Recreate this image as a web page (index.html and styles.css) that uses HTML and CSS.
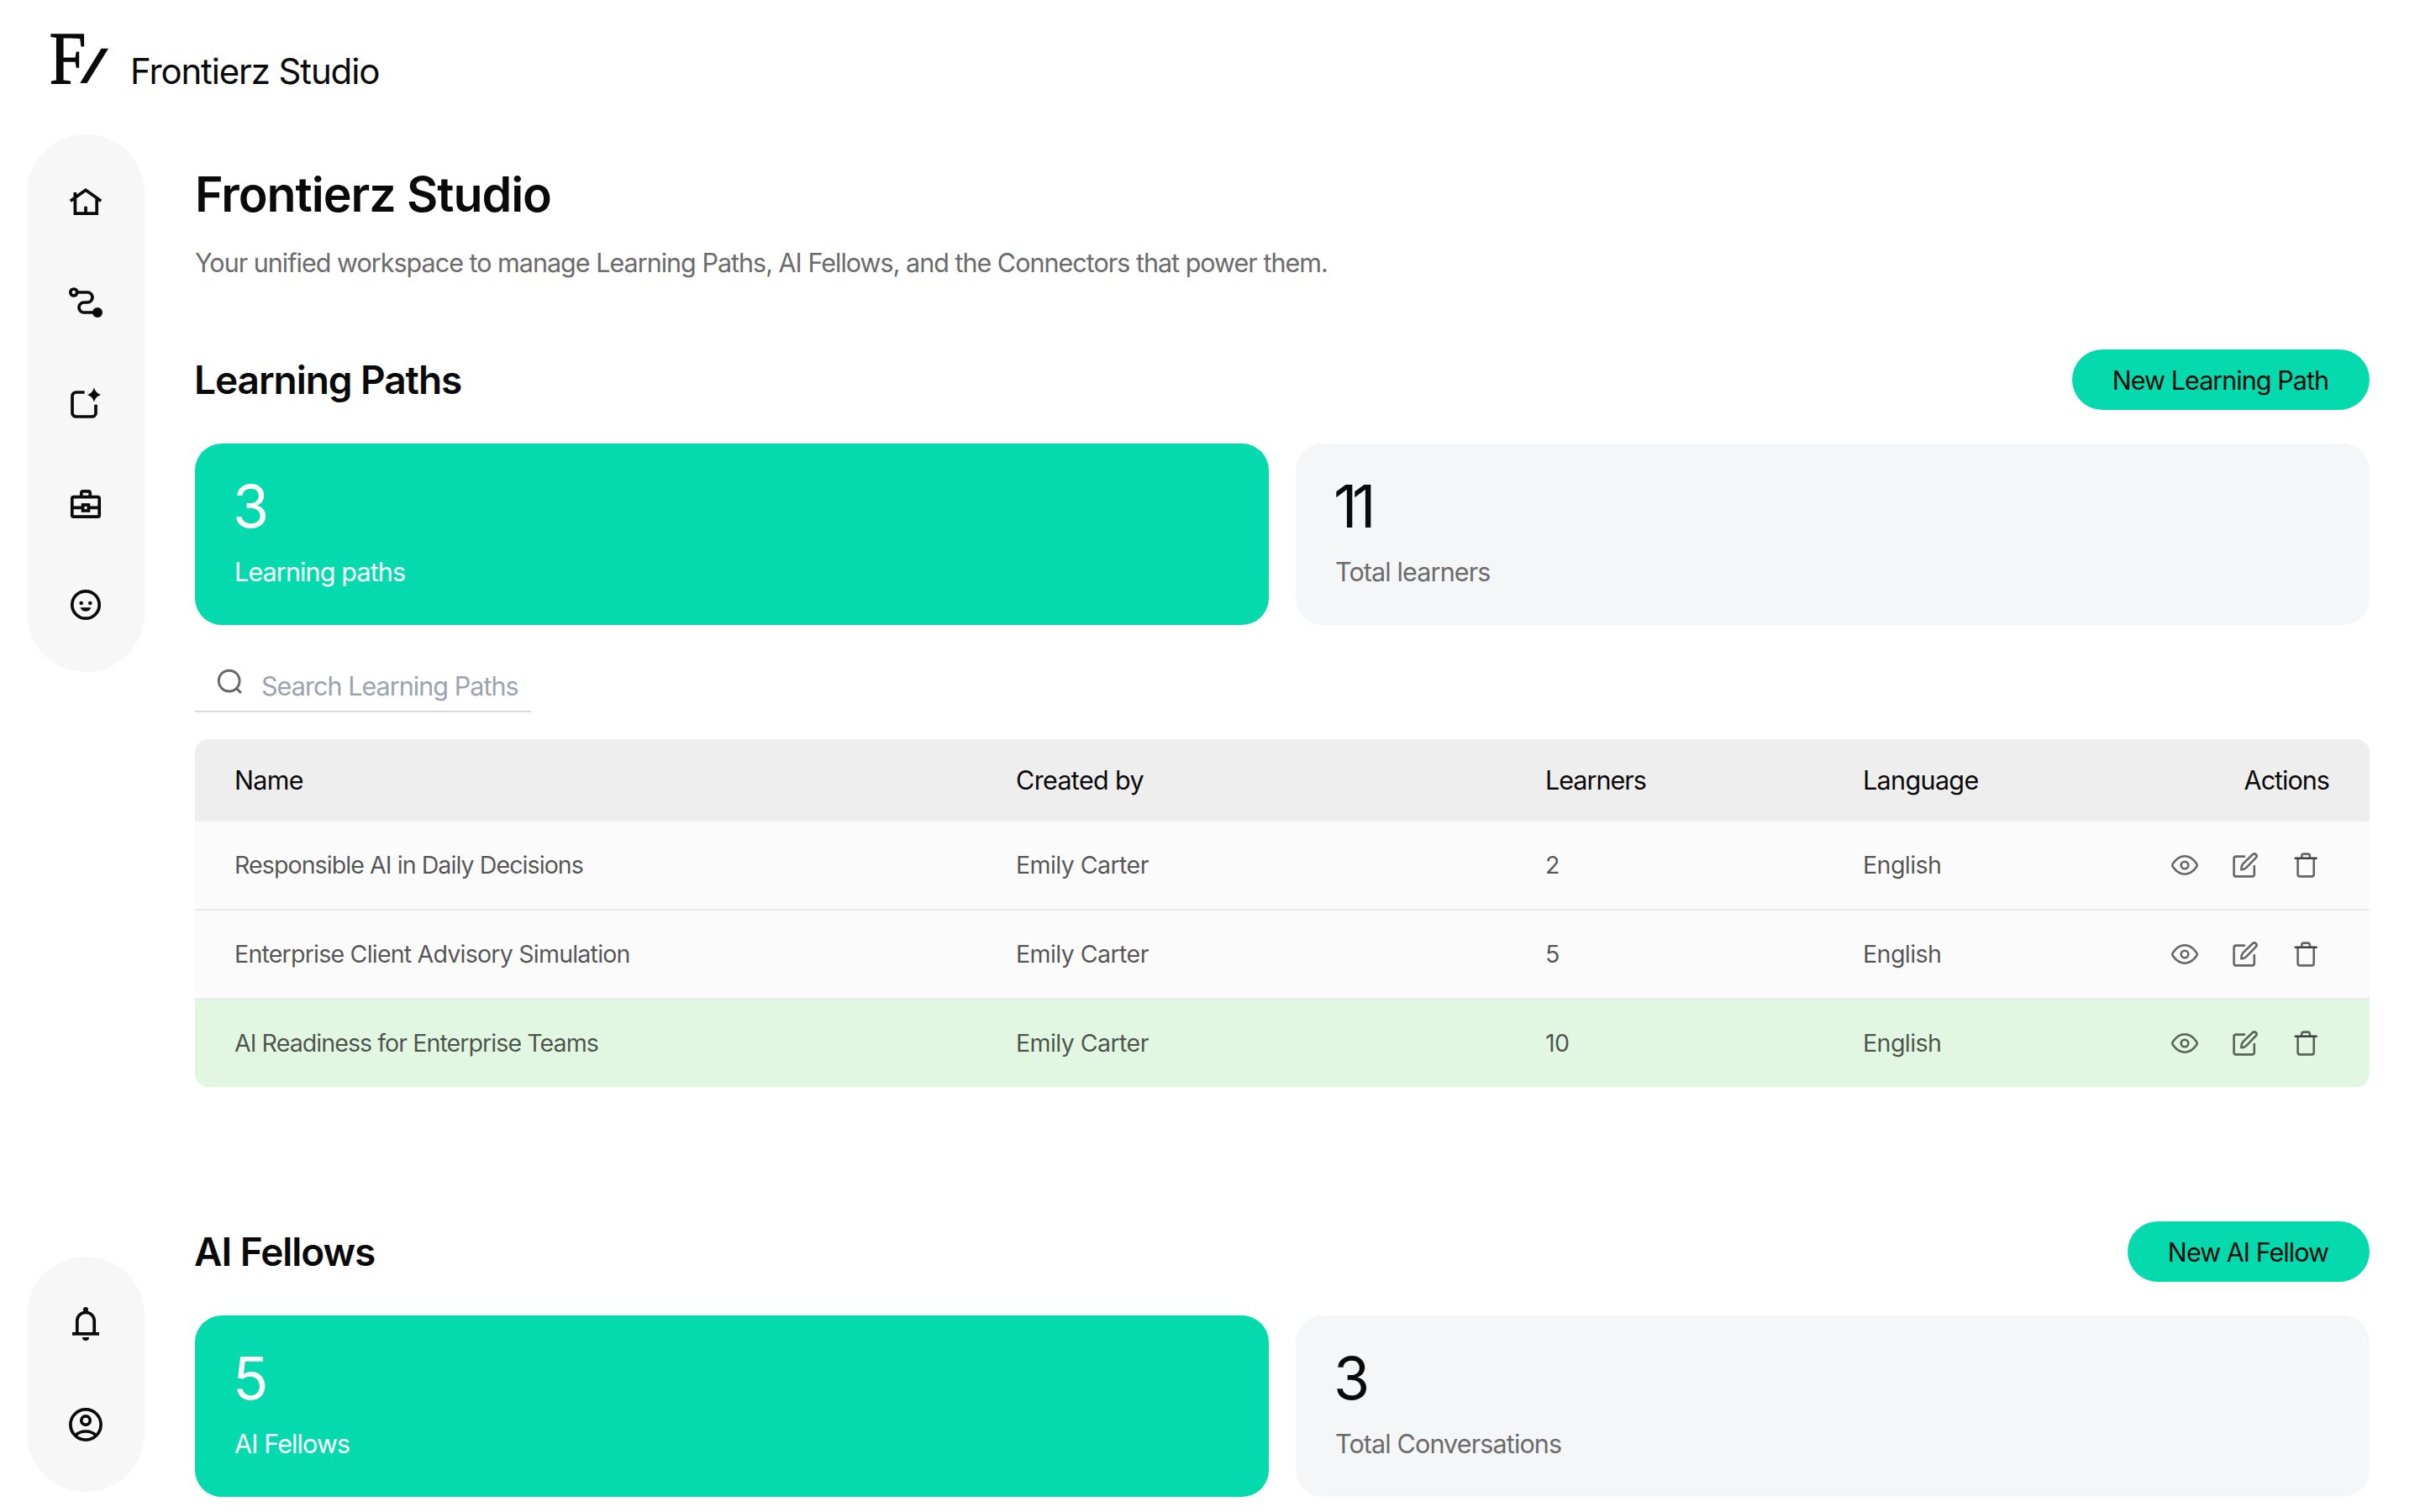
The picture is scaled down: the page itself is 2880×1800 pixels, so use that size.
FILE: index.html
```
<!DOCTYPE html>
<html lang="en">
<head>
<meta charset="utf-8">
<title>Frontierz Studio</title>
<link rel="stylesheet" href="styles.css">
</head>
<body>
<svg class="symbols" aria-hidden="true">
  <symbol id="eye" viewBox="0 0 36 36"><path d="M3.8 19.8a3.2 3.2 0 0 1 0-3.6C7.8 10.6 12.6 7.3 18 7.3s10.2 3.3 14.2 8.9a3.2 3.2 0 0 1 0 3.6C28.2 25.4 23.4 28.7 18 28.7S7.8 25.4 3.8 19.8Z"/><circle cx="18" cy="18" r="4.3"/></symbol>
  <symbol id="edit" viewBox="0 0 36 36"><path d="M17 7.6H6.9a2.3 2.3 0 0 0-2.3 2.3v19.2a2.3 2.3 0 0 0 2.3 2.3h19.6a2.3 2.3 0 0 0 2.3-2.3V19"/><path d="M13.3 23.3c0-3 .3-5 2-6.9L26.8 5.3c1.2-1 2.8-1 3.9 0s1 2.7 0 3.9L19.6 20.7c-1.8 1.8-3.5 2.6-6.3 2.6Z"/></symbol>
  <symbol id="trash" viewBox="0 0 36 36"><path d="M8.6 10v18.8a2.6 2.6 0 0 0 2.6 2.6h13.9a2.6 2.6 0 0 0 2.6-2.6V10M13.2 9.6V7a2.4 2.4 0 0 1 2.4-2.4h4.9A2.4 2.4 0 0 1 22.9 7v2.6"/><path class="lid" d="M5.8 9.8h24.8"/></symbol>
</svg>

<header class="topbar">
  <svg class="logo" width="70" height="60" viewBox="0 0 70 60"><text class="logo-letter" transform="translate(-1.2 59) scale(.87 .99)">F</text><path d="M60.5 17.8H69L43.5 59H35.2Z"/></svg>
  <span class="brand">Frontierz Studio</span>
</header>

<div class="layout">
  <aside class="sidebar">
    <nav class="rail">
      <a class="rail-item"><svg viewBox="0 0 48 48"><path class="line" d="M5.8 23.2 24 10.3l18.2 12.9M11.4 13v25.2h25.8V20M24 29.7V38"/></svg></a>
      <a class="rail-item"><svg viewBox="0 0 48 48"><circle class="line" cx="9.8" cy="12" r="4"/><path class="line" d="M14 12h12a6 6 0 0 1 0 12h-4a6 6 0 0 0 0 12h13"/><circle cx="38" cy="36" r="6"/></svg></a>
      <a class="rail-item"><svg viewBox="0 0 48 48"><path class="line" d="M22.6 11H12.5A4.5 4.5 0 0 0 8 15.5v20a4.5 4.5 0 0 0 4.5 4.5h19a4.5 4.5 0 0 0 4.5-4.5V25.7"/><path d="M34 5.5c1.6 4.6 3.4 6.7 8 8.5-4.6 1.8-6.4 3.9-8 8.5-1.6-4.6-3.4-6.7-8-8.5 4.6-1.8 6.4-3.9 8-8.5Z"/></svg></a>
      <a class="rail-item"><svg viewBox="0 0 48 48"><rect class="line" x="7.8" y="15.6" width="32.4" height="23.6" rx="2"/><path class="line" d="M18.8 15V10.8a2 2 0 0 1 2-2h6.4a2 2 0 0 1 2 2V15M8 28.4h12M28 28.4h12"/><rect class="line" x="20.6" y="25" width="6.8" height="7"/></svg></a>
      <a class="rail-item"><svg viewBox="0 0 48 48"><circle class="line" cx="24" cy="24" r="16.2"/><circle cx="18.7" cy="22" r="2.3"/><circle cx="29.3" cy="22" r="2.3"/><path d="M17.6 27.2h12.8c-1.1 3-3.4 4.6-6.4 4.6s-5.3-1.6-6.4-4.6Z"/></svg></a>
    </nav>
    <nav class="rail">
      <a class="rail-item"><svg viewBox="0 0 48 48"><path class="line" d="M13.8 35V20.5a10.2 10.2 0 0 1 20.4 0V35M8 35.8h32"/><circle cx="24" cy="7" r="3"/><path d="M20 40h8a4 4 0 0 1-8 0Z"/></svg></a>
      <a class="rail-item"><svg viewBox="0 0 48 48"><circle class="line" cx="24" cy="24" r="18.1"/><circle class="line" cx="24" cy="19" r="5.2"/><path class="line" d="M11.5 37c3.4-3.4 7.6-5 12.500-5s9.100 1.600 12.500 5"/></svg></a>
    </nav>
  </aside>

  <main class="content">
    <h1 class="title">Frontierz Studio</h1>
    <p class="subtitle">Your unified workspace to manage Learning Paths, AI Fellows, and the Connectors that power them.</p>

    <section class="section">
      <div class="section-head"><h2>Learning Paths</h2><button class="button">New Learning Path</button></div>
      <div class="cards">
        <div class="card accent"><div class="number">3</div><div class="label">Learning paths</div></div>
        <div class="card"><div class="number eleven">11</div><div class="label">Total learners</div></div>
      </div>
      <div class="search">
        <svg width="32" height="32" viewBox="0 0 32 32"><circle cx="15.7" cy="14.6" r="12.4"/><path d="m24.300 23.400 5.600 5.600"/></svg>
        <span>Search Learning Paths</span>
      </div>
      <div class="table">
        <div class="row head"><span>Name</span><span>Created by</span><span class="tight">Learners</span><span>Language</span><span class="tight">Actions</span></div>
        <div class="row"><span>Responsible AI in Daily Decisions</span><span>Emily Carter</span><span>2</span><span>English</span><span class="actions"><svg><use href="#eye"/></svg><svg><use href="#edit"/></svg><svg><use href="#trash"/></svg></span></div>
        <div class="row"><span class="loose">Enterprise Client Advisory Simulation</span><span>Emily Carter</span><span>5</span><span>English</span><span class="actions"><svg><use href="#eye"/></svg><svg><use href="#edit"/></svg><svg><use href="#trash"/></svg></span></div>
        <div class="row highlight"><span>AI Readiness for Enterprise Teams</span><span>Emily Carter</span><span>10</span><span>English</span><span class="actions"><svg><use href="#eye"/></svg><svg><use href="#edit"/></svg><svg><use href="#trash"/></svg></span></div>
      </div>
    </section>

    <section class="section">
      <div class="section-head"><h2>AI Fellows</h2><button class="button">New AI Fellow</button></div>
      <div class="cards">
        <div class="card accent"><div class="number">5</div><div class="label">AI Fellows</div></div>
        <div class="card"><div class="number">3</div><div class="label">Total Conversations</div></div>
      </div>
    </section>
  </main>
</div>
</body>
</html>
```
FILE: styles.css
```
* { box-sizing: border-box; }
body {
  margin: 0;
  height: 1800px;
  overflow: hidden;
  background: #fff;
  color: #0b0a0a;
  font-family: Inter, "Liberation Sans", sans-serif;
  font-size: 30.5px;
  line-height: 40px;
  letter-spacing: -0.9px;
}
h1, h2, p { margin: 0; }
.symbols { display: none; }

.topbar {
  display: flex;
  gap: 25px;
  height: 160px;
  padding: 40px 60px 0;
}
.logo { overflow: visible; fill: #0b0a0a; }
.logo-letter { font: 90px "Liberation Serif", serif; letter-spacing: 0; stroke: #0b0a0a; stroke-width: 1.4px; }
.brand { padding-top: 19.6px; font-size: 42px; line-height: 50px; letter-spacing: -1.14px; }

.layout { display: flex; gap: 60px; height: 1640px; padding: 0 60px 24px 32px; }
.sidebar { display: flex; flex-direction: column; justify-content: space-between; width: 140px; }
.rail { padding: 20px 0; border-radius: 70px; background: #f7f7f7; }
.rail-item { display: flex; align-items: center; justify-content: center; height: 120px; }
.rail-item svg { width: 48px; height: 48px; fill: #0b0a0a; }
.rail-item .line { fill: none; stroke: #0b0a0a; stroke-width: 3.7px; }

.content { flex: 1; padding-top: 41px; }
.title { font-size: 57.3px; font-weight: 600; line-height: 60px; letter-spacing: -1.05px; }
.subtitle { margin-top: 32px; color: #6b6b6b; letter-spacing: -0.99px; }

.section { margin-top: 83px; }
.section + .section { margin-top: 160px; }
.section-head { display: flex; align-items: center; justify-content: space-between; height: 72px; }
h2 { margin-left: -1px; padding-bottom: 1px; font-size: 46px; font-weight: 600; line-height: 60px; letter-spacing: -1.05px; }
.button {
  height: 72px;
  padding: 1px 49px 0 48px;
  border: 0;
  border-radius: 36px;
  background: #05daae;
  color: #0b0a0a;
  font: inherit;
  letter-spacing: -0.96px;
}

.cards { display: grid; grid-template-columns: 1fr 1fr; gap: 32px; margin-top: 40px; }
.card { height: 216px; padding: 40px 47px 0; border-radius: 32px; background: #f5f6f8; }
.number { margin-left: -2px; font-size: 70px; line-height: 70px; letter-spacing: 0; }
.number.eleven { letter-spacing: -6.5px; }
.label { margin-top: 23px; color: #6b6b6b; letter-spacing: -0.87px; }
.accent { background: #05daae; color: #fff; }
.accent .label { color: #fff; }

.search {
  display: flex;
  width: 400px;
  height: 64px;
  margin-top: 40px;
  padding-left: 25px;
  border-bottom: 2px solid #d9d9d9;
  color: #9ca3af;
  letter-spacing: -0.95px;
}
.search svg { margin: 12px 22px 0 0; flex: none; fill: none; stroke: #666; stroke-width: 2.9px; }
.search span { padding-top: 13px; white-space: nowrap; }

.table { margin-top: 32px; border-radius: 16px; overflow: hidden; }
.row {
  display: grid;
  grid-template-columns: 930px 630px 378px 1fr auto;
  align-items: center;
  height: 106px;
  padding: 0 48px 0 47px;
  border-bottom: 2px solid #eaeaea;
  background: #fbfbfb;
  color: rgba(11, 10, 10, 0.7);
  font-size: 28.6px;
  letter-spacing: -0.6px;
}
.row span:first-child { letter-spacing: -0.95px; }
.row .loose:first-child { letter-spacing: -0.81px; }
.head, .head span:first-child { letter-spacing: -0.65px; }
.head .tight { letter-spacing: -0.98px; }
.head { height: 98px; border-bottom: 0; background: #eee; color: #0b0a0a; font-size: 30.5px; }
.highlight { height: 104px; border-bottom: 0; background: #e1f7e1; }
.actions { display: flex; gap: 36px; padding-right: 10px; }
.actions svg { width: 36px; height: 36px; fill: none; stroke: #666; stroke-width: 2.6px; stroke-linecap: round; stroke-linejoin: round; }
.highlight .actions svg { stroke: #5b645b; }
.lid { stroke: #3f3f3f; }
```
